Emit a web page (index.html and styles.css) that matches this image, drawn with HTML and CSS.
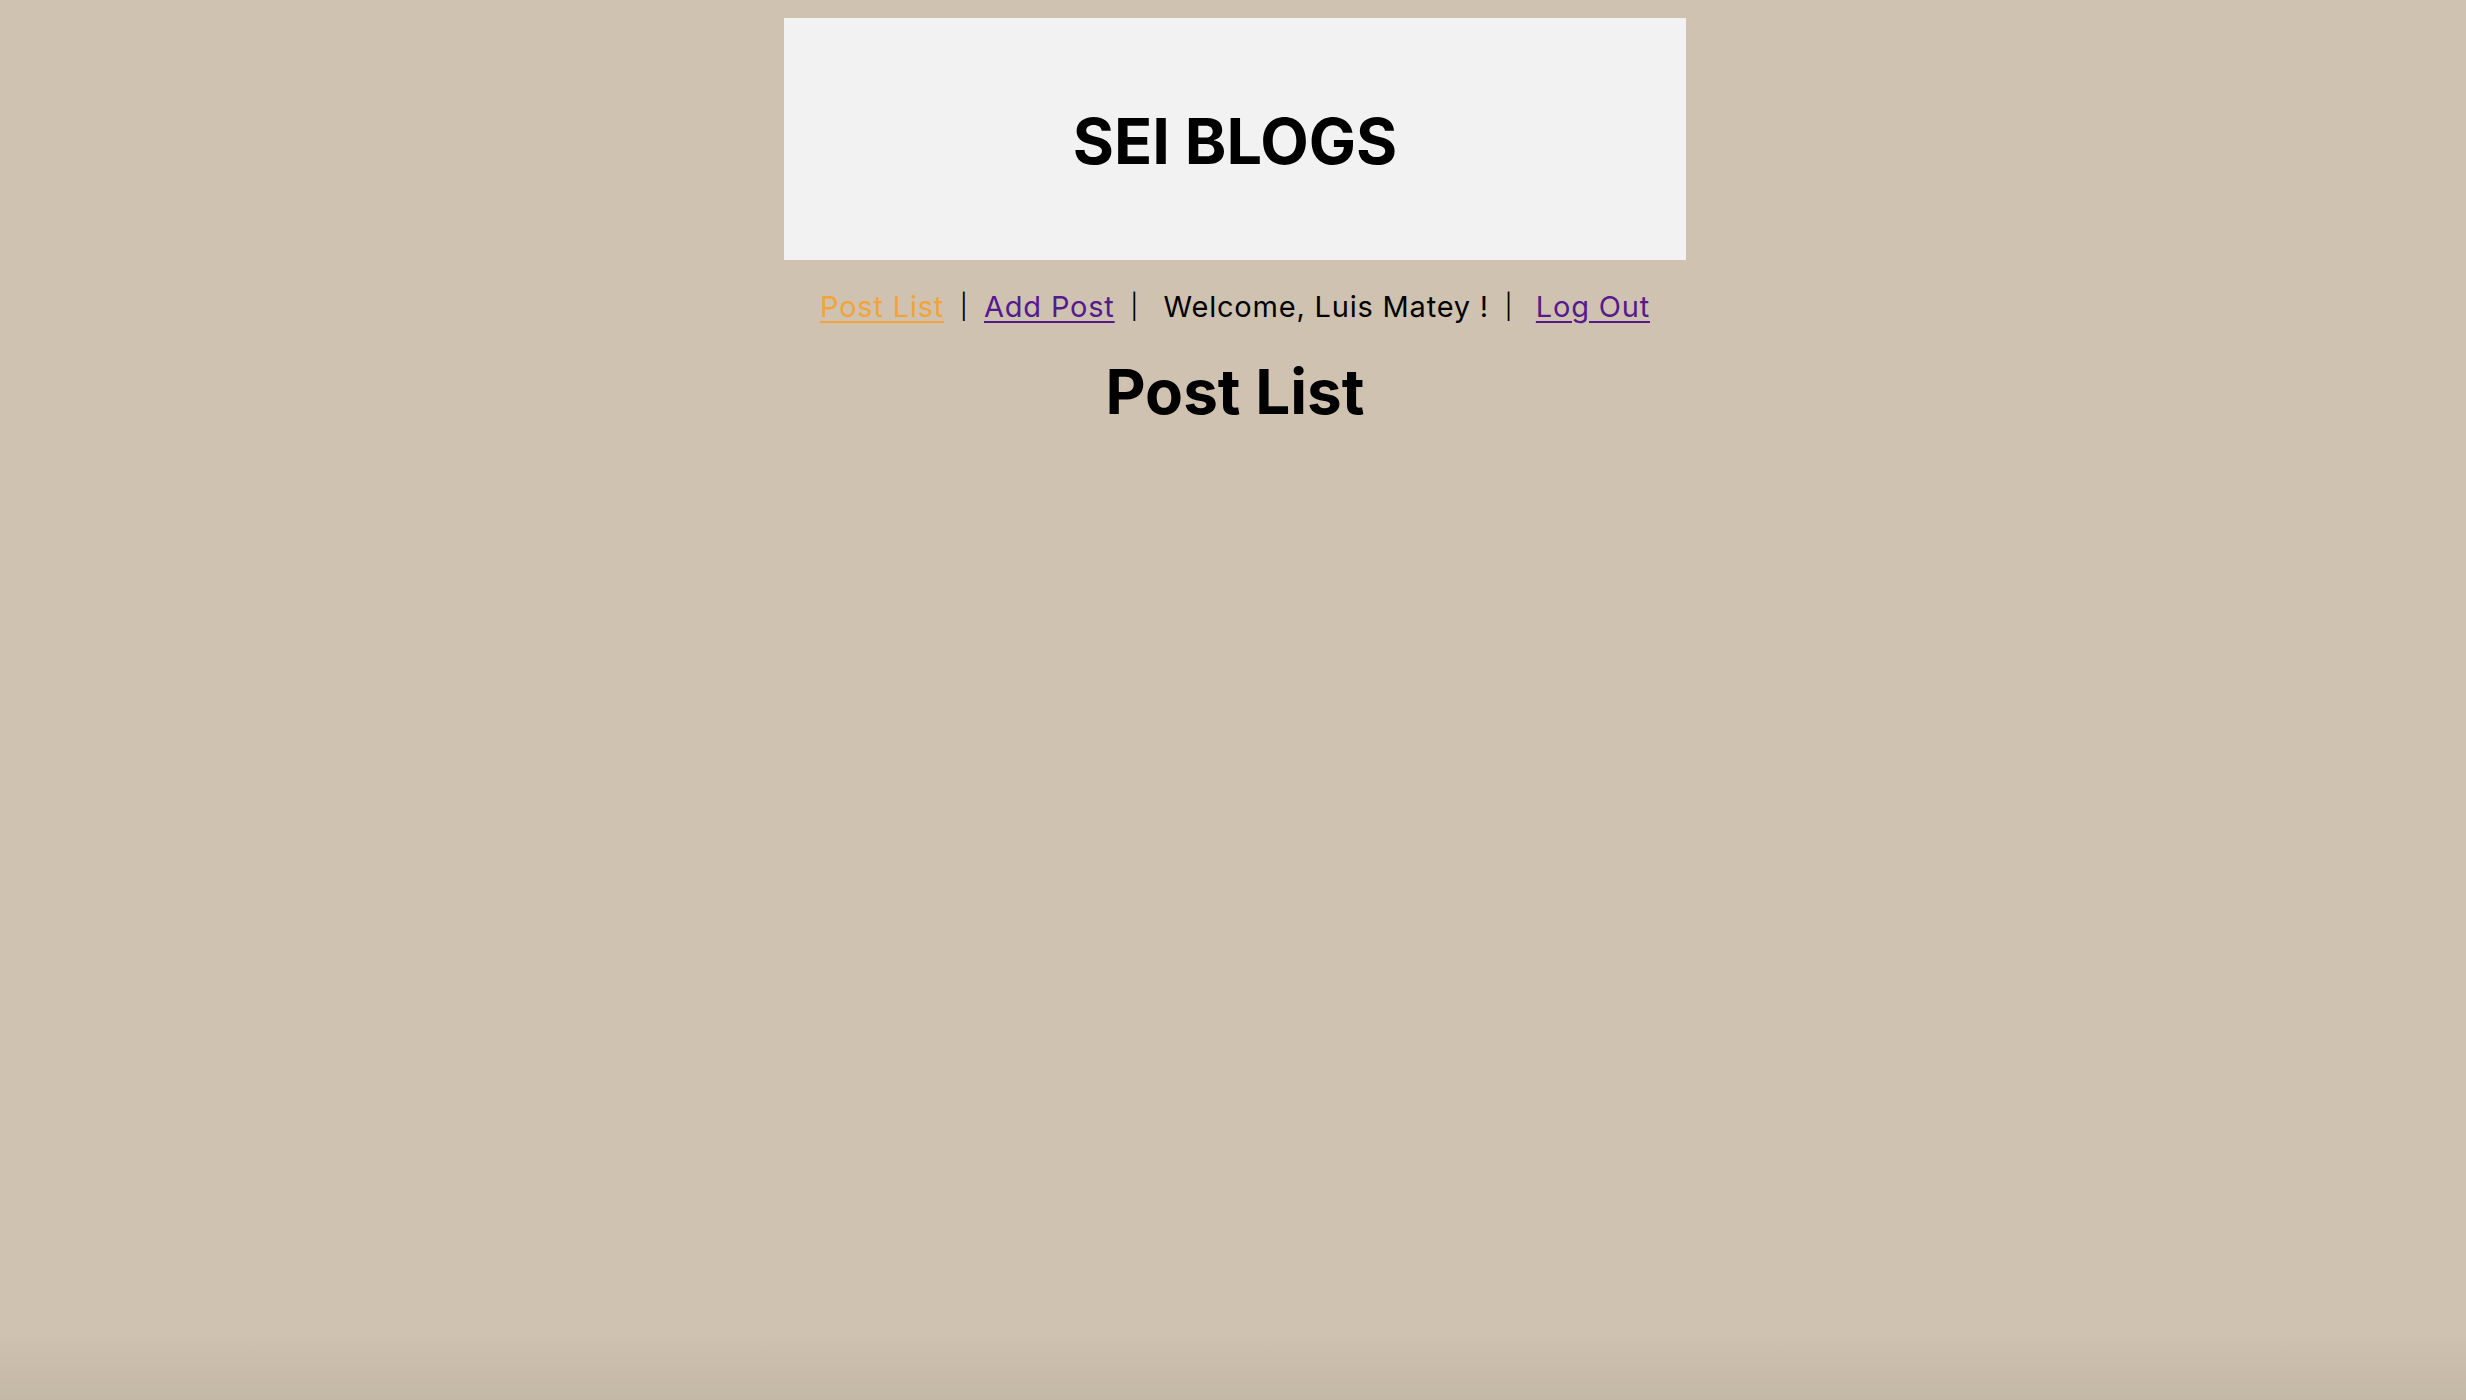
FILE: index.html
```html
<!DOCTYPE html>
<html lang="en">
<head>
<meta charset="utf-8">
<title>SEI BLOGS</title>
<link rel="stylesheet" href="styles.css">
</head>
<body>
<div class="page">
  <header class="banner">
    <h1 class="brand">SEI BLOGS</h1>
  </header>
  <nav class="nav">
    <a class="nav-link active" href="#">Post List</a>
    <span class="sep sep-a">|</span>
    <a class="nav-link" href="#">Add Post</a>
    <span class="sep sep-b">|</span>
    <span class="welcome">Welcome, Luis Matey !</span>
    <span class="sep sep-c">|</span>
    <a class="nav-link" href="#">Log Out</a>
  </nav>
  <h2 class="title">Post List</h2>
</div>
</body>
</html>
```
FILE: styles.css
```css
html, body {
  margin: 0;
  padding: 0;
  height: 100%;
}
body {
  background: linear-gradient(to bottom, #d0c2b1 0, #d0c2b1 1330px, #c3b7a6 1400px);
  font-family: Inter, "Noto Sans", "Liberation Sans", sans-serif;
  color: #000;
}
.page {
  width: 902px;
  margin: 0 auto;
  padding-top: 18px;
  display: flex;
  flex-direction: column;
  align-items: center;
  position: relative;
  left: 2px;
}
.banner {
  width: 100%;
  height: 242px;
  background: #f2f2f2;
  display: flex;
  align-items: center;
  justify-content: center;
  box-sizing: border-box;
  padding-top: 4px;
}
.brand {
  margin: 0;
  font-size: 63px;
  font-weight: 700;
  line-height: 76px;
}
.nav {
  margin-top: 30px;
  display: flex;
  align-items: baseline;
  font-size: 29px;
  line-height: 34px;
  letter-spacing: 0.8px;
}
.nav-link {
  color: #551a8b;
  text-decoration: underline;
  text-underline-offset: 4px;
  text-decoration-thickness: 2px;
}
.nav-link.active {
  color: #f2a43a;
}
.sep {
  font-weight: 300;
  transform: scaleY(0.85);
  margin: 0 15px;
}
.sep-b {
  margin-right: 24px;
}
.sep-c {
  margin-left: 15px;
  margin-right: 22px;
}
.title {
  margin: 30px 0 0;
  font-size: 62px;
  font-weight: 700;
  line-height: 75px;
}
```
